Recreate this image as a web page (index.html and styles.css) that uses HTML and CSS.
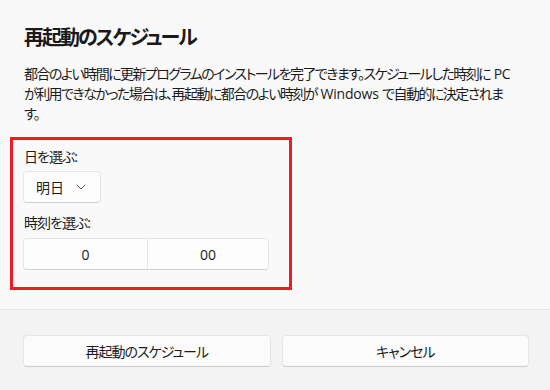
FILE: index.html
```html
<!DOCTYPE html>
<html lang="ja">
<head>
<meta charset="utf-8">
<link rel="stylesheet" href="styles.css">
</head>
<body>
<div class="dialog">
  <div class="content">
    <h1 class="title">再起動のスケジュール</h1>
    <p class="desc">都合のよい時間に更新プログラムのインストールを完了できます。スケジュールした時刻に<span class="lat"> PC</span><br>が利用できなかった場合は、再起動に都合のよい時刻が<span class="lat"> Windows </span>で自動的に決定されま<br>す。</p>
    <div class="highlight">
      <div class="label">日を選ぶ:</div>
      <button class="select"><span>明日</span>
        <svg class="chev" width="10" height="6" viewBox="0 0 10 6"><path d="M1 1 L5 5 L9 1" fill="none" stroke="#5a5a5a" stroke-width="1" stroke-linecap="round" stroke-linejoin="round"/></svg>
      </button>
      <div class="label label-time">時刻を選ぶ:</div>
      <div class="timepicker">
        <div class="cell">0</div>
        <div class="cell">00</div>
      </div>
    </div>
  </div>
  <div class="footer">
    <button class="btn">再起動のスケジュール</button>
    <button class="btn">キャンセル</button>
  </div>
</div>
</body>
</html>
```
FILE: styles.css
```css
* { box-sizing: border-box; }
html, body { margin: 0; padding: 0; }
body {
  width: 550px;
  height: 390px;
  overflow: hidden;
  font-family: "Open Sans", "Noto Sans CJK JP", sans-serif;
  font-feature-settings: "palt";
  color: #1b1b1b;
  background: #f9f9f9;
}
.dialog {
  width: 550px;
  height: 390px;
  display: flex;
  flex-direction: column;
}
.content {
  height: 309px;
  flex: none;
  padding: 24px 0 0 24px;
  background: #f9f9f9;
}
.title {
  margin: 0;
  font-size: 20px;
  line-height: 28px;
  font-weight: 600;
  letter-spacing: -2px;
  color: #1a1a1a;
}
.desc {
  margin: 12px 0 0 0;
  font-size: 14px;
  line-height: 20px;
  letter-spacing: -1.55px;
  width: 526px;
  white-space: nowrap;
  color: #1b1b1b;
}
.lat { letter-spacing: -0.2px; }
.highlight {
  margin: 13px 0 0 -14px;
  width: 282px;
  height: 153px;
  border: 3px solid #ee1c25;
  padding: 7px 0 0 10px;
}
.label {
  font-size: 14px;
  line-height: 20px;
  letter-spacing: -1px;
  padding-left: 1px;
}
.select {
  margin-top: 4px;
  width: 78px;
  height: 32px;
  display: flex;
  align-items: center;
  justify-content: space-between;
  padding: 0 14px 0 12px;
  background: #fdfdfd;
  border: 1px solid #e5e5e5;
  border-bottom-color: #d0d0d0;
  border-radius: 4px;
  font-family: inherit;
  font-feature-settings: "palt";
  font-size: 14px;
  color: #1b1b1b;
}
.chev { display: block; }
.label-time { margin-top: 10px; }
.timepicker {
  margin-top: 5px;
  width: 246px;
  height: 32px;
  display: grid;
  grid-template-columns: 123px 1fr;
  background: #fdfdfd;
  border: 1px solid #e5e5e5;
  border-bottom-color: #d0d0d0;
  border-radius: 4px;
}
.cell {
  display: flex;
  align-items: center;
  justify-content: center;
  font-size: 14px;
}
.cell + .cell { border-left: 1px solid #e5e5e5; }
.footer {
  flex: 1;
  background: #f3f3f3;
  border-top: 1px solid #e5e5e5;
  padding: 25px 21px 0 23px;
  display: grid;
  grid-template-columns: 1fr 1fr;
  column-gap: 11px;
  align-items: start;
}
.btn {
  height: 32px;
  background: #fbfbfb;
  border: 1px solid #e5e5e5;
  border-bottom-color: #cccccc;
  border-radius: 4px;
  font-family: inherit;
  font-feature-settings: "palt";
  font-size: 14px;
  letter-spacing: -1px;
  color: #1b1b1b;
}
```
